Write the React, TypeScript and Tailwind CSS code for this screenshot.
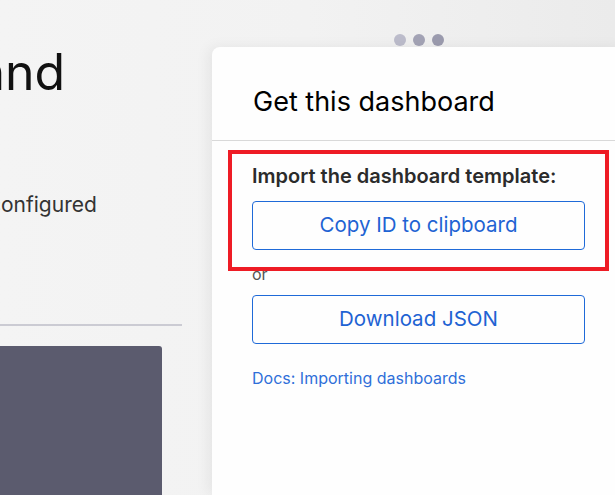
import React from "react";

export default function App() {
  return (
    <div
      className="relative flex h-[495px] w-[615px] overflow-hidden bg-gradient-to-r from-[#f4f4f4] via-[#f2f2f2] to-[#ebebeb]"
      style={{ fontFamily: "Inter, 'Noto Sans', sans-serif" }}
    >
      {/* Left clipped content */}
      <div className="flex w-[212px] shrink-0 flex-col overflow-hidden">
        <div className="-ml-[23px] mt-[42px] whitespace-nowrap text-[50px] leading-[60px] text-[#111]">
          and
        </div>
        <div className="-ml-[11px] mt-[89px] whitespace-nowrap text-[21px] leading-[28px] text-[#333]">
          configured
        </div>
        <div className="mt-[105px] h-[2px] w-[182px] bg-[#cbcbd3]" />
        <div className="mt-[20px] h-[149px] w-[162px] rounded-tr-[3px] bg-[#5b5b6e]" />
      </div>

      {/* Right panel column */}
      <div className="flex w-[412px] shrink-0 flex-col">
        <div className="mt-[34px] flex h-[12px] items-center justify-center gap-[7px] pl-[1px]">
          <span className="h-[12px] w-[12px] rounded-full bg-[#bcbccb]" />
          <span className="h-[12px] w-[12px] rounded-full bg-[#a3a3b5]" />
          <span className="h-[12px] w-[12px] rounded-full bg-[#9b9bae]" />
        </div>
        <div className="mt-[1px] flex-1 rounded-tl-[8px] bg-[#fefefe] shadow-[-4px_0_14px_rgba(0,0,0,0.06)]">
          <div className="px-[41px] pb-[23px] pt-[40px] text-[27px] leading-[30px] text-black">
            Get this dashboard
          </div>
          <div className="h-px bg-[#d9d9d9]" />
          <div className="flex flex-col pl-[40px] pr-[39px] pt-[23px]">
            <div className="text-[20px] font-semibold leading-[24px] text-[#2b2b2b]">
              Import the dashboard template:
            </div>
            <button className="mt-[13px] h-[49px] w-[333px] rounded-[4px] border border-[#1f6ad8] text-[20.5px] text-[#1f63d3]">
              Copy ID to clipboard
            </button>
            <div className="mt-[14px] text-[16px] leading-[20px] text-[#555]">or</div>
            <button className="mt-[11px] h-[49px] w-[333px] rounded-[4px] border border-[#1f6ad8] text-[20.5px] text-[#1f63d3]">
              Download JSON
            </button>
            <a className="mt-[22px] text-[16px] leading-[24px] text-[#2f6fd9]">
              Docs: Importing dashboards
            </a>
          </div>
        </div>
      </div>

      {/* Red annotation box */}
      <div className="pointer-events-none absolute left-[228px] top-[150px] h-[121px] w-[381px] border-[4.5px] border-[#ee1c25]" />
    </div>
  );
}
